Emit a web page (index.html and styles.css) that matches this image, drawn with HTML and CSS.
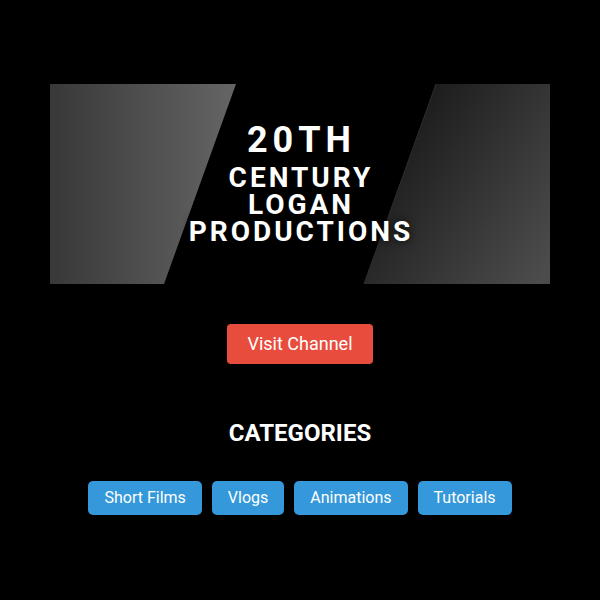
FILE: index.html
```html
<!DOCTYPE html>
<html lang="en">
<head>
<meta charset="utf-8">
<title>20th Century Logan Productions</title>
<link rel="stylesheet" href="styles.css">
</head>
<body>
<main class="page">
  <section class="banner">
    <svg class="banner-art" width="500" height="200" viewBox="0 0 500 200" aria-hidden="true">
      <defs>
        <linearGradient id="gl" x1="0" y1="0" x2="1" y2="0">
          <stop offset="0" stop-color="#383838"/>
          <stop offset="1" stop-color="#656565"/>
        </linearGradient>
        <linearGradient id="gr" x1="0" y1="0.2" x2="1" y2="0.9">
          <stop offset="0" stop-color="#141414"/>
          <stop offset="1" stop-color="#4c4c4c"/>
        </linearGradient>
      </defs>
      <rect width="500" height="200" fill="#000"/>
      <polygon points="0,0 186,0 114,200 0,200" fill="url(#gl)"/>
      <polygon points="386,0 500,0 500,200 314,200" fill="url(#gr)"/>
      <line x1="386" y1="0" x2="314" y2="200" stroke="#2e2e2e" stroke-width="1"/>
    </svg>
    <h1 class="banner-title">
      <span class="title-big">20TH</span>
      <span class="title-line">CENTURY</span>
      <span class="title-line">LOGAN</span>
      <span class="title-line">PRODUCTIONS</span>
    </h1>
  </section>

  <a class="visit-btn" href="#">Visit Channel</a>

  <h2 class="section-title">CATEGORIES</h2>

  <ul class="chips">
    <li class="chip">Short Films</li>
    <li class="chip">Vlogs</li>
    <li class="chip">Animations</li>
    <li class="chip">Tutorials</li>
  </ul>
</main>
</body>
</html>
```

FILE: styles.css
```css
html, body {
  margin: 0;
  padding: 0;
  background: #000;
}

body {
  font-family: Roboto, "Liberation Sans", Arial, sans-serif;
  color: #fff;
}

.page {
  display: flex;
  flex-direction: column;
  align-items: center;
  padding-top: 84px;
}

.banner {
  display: grid;
  width: 500px;
  height: 200px;
}

.banner-art {
  grid-area: 1 / 1;
  display: block;
}

.banner-title {
  grid-area: 1 / 1;
  margin: 0;
  padding-top: 32px;
  display: flex;
  flex-direction: column;
  align-items: center;
  justify-content: flex-start;
  font-weight: 700;
  text-shadow: 0 0 8px rgba(0, 0, 0, 0.85);
  text-align: center;
}

.title-big {
  display: block;
  font-size: 36px;
  line-height: 48px;
  letter-spacing: 5px;
  padding-left: 3px;
}

.title-line {
  display: block;
  font-size: 28px;
  line-height: 27px;
  letter-spacing: 3px;
  padding-left: 2px;
}

.visit-btn {
  display: block;
  margin-top: 40px;
  height: 40px;
  line-height: 40px;
  padding: 0 20px;
  background: #e74c3c;
  color: #fff;
  font-size: 18px;
  text-decoration: none;
  border-radius: 4px;
}

.section-title {
  margin: 55px 0 0;
  font-size: 24px;
  line-height: 28px;
  font-weight: 700;
}

.chips {
  list-style: none;
  margin: 34px 0 0;
  padding: 0;
  display: flex;
  gap: 10px;
}

.chip {
  height: 34px;
  line-height: 34px;
  padding: 0 16px;
  background: #3498db;
  color: #fff;
  font-size: 16px;
  border-radius: 5px;
}
```
